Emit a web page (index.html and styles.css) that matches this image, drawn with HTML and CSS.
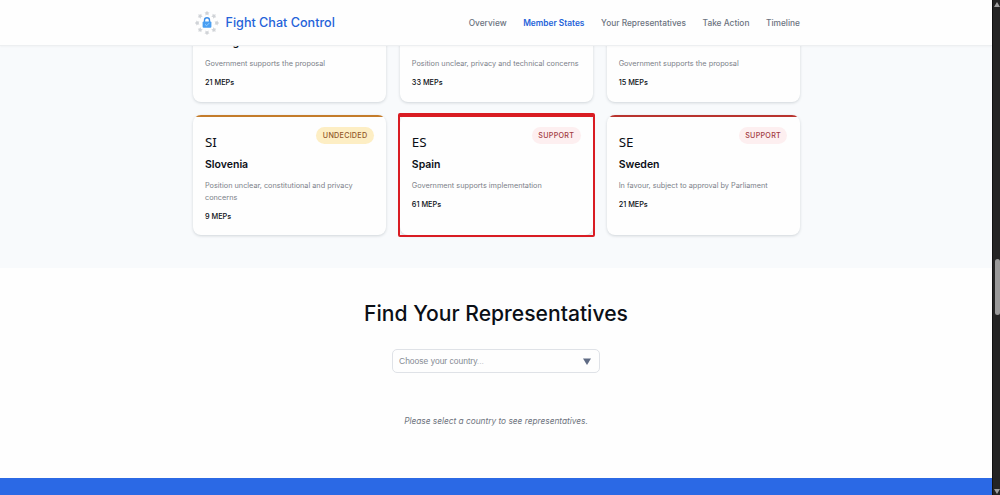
FILE: index.html
```html
<!DOCTYPE html>
<html lang="en">
<head>
<meta charset="utf-8">
<title>Fight Chat Control</title>
<link rel="stylesheet" href="styles.css">
</head>
<body>
<div class="window">
  <div class="page">
    <header class="header">
      <div class="brand">
        <svg class="logo" viewBox="0 0 24 24">
          <g fill="#d0d3d7">
            <path id="s" d="M12 -.2l.9 1.4 1.6.3-1.1 1.2.2 1.7-1.6-.8-1.6.8.2-1.7-1.1-1.2 1.6-.3z"/>
            <use href="#s" transform="rotate(45 12 12)"/>
            <use href="#s" transform="rotate(90 12 12)"/>
            <use href="#s" transform="rotate(135 12 12)"/>
            <use href="#s" transform="rotate(180 12 12)"/>
            <use href="#s" transform="rotate(225 12 12)"/>
            <use href="#s" transform="rotate(270 12 12)"/>
            <use href="#s" transform="rotate(315 12 12)"/>
          </g>
          <path d="M9.5 11V9.2a2.5 2.5 0 0 1 5 0V11" fill="none" stroke="#3d8ee8" stroke-width="1.4"/>
          <rect x="7.6" y="10.4" width="8.8" height="6.4" rx="1" fill="#4a9ff2"/>
          <path d="M10 13.3l1.6 1.5 2.6-2.7" fill="none" stroke="#9ed2ff" stroke-width=".9"/>
        </svg>
        <span>Fight Chat Control</span>
      </div>
      <nav class="nav">
        <a>Overview</a><a class="active">Member States</a><a>Your Representatives</a><a>Take Action</a><a>Timeline</a>
      </nav>
    </header>
    <section class="states">
      <div class="grid">
        <article class="card support"><div class="code"></div><h3>Portugal</h3><p>Government supports the proposal</p><strong>21 MEPs</strong></article>
        <article class="card undecided"><div class="code"></div><h3></h3><p>Position unclear, privacy and technical concerns</p><strong>33 MEPs</strong></article>
        <article class="card support"><div class="code"></div><h3></h3><p>Government supports the proposal</p><strong>15 MEPs</strong></article>
        <article class="card undecided"><span class="badge">UNDECIDED</span><div class="code">SI</div><h3>Slovenia</h3><p>Position unclear, constitutional and privacy concerns</p><strong>9 MEPs</strong></article>
        <article class="card support marked"><span class="badge">SUPPORT</span><div class="code">ES</div><h3>Spain</h3><p>Government supports implementation</p><strong>61 MEPs</strong></article>
        <article class="card support"><span class="badge">SUPPORT</span><div class="code">SE</div><h3>Sweden</h3><p>In favour, subject to approval by Parliament</p><strong>21 MEPs</strong></article>
      </div>
    </section>
    <section class="find">
      <h2>Find Your Representatives</h2>
      <div class="select"><span>Choose your country<span class="dots">...</span></span><svg class="caret" viewBox="0 0 8 7"><path d="M0 .5h8L4 7z" fill="#5f6b84"/></svg></div>
      <p class="hint">Please select a country to see representatives.</p>
    </section>
    <section class="cta"></section>
  </div>
  <div class="scrollbar">
    <svg class="arrow" viewBox="0 0 6 5"><path d="M3 0l3 5H0z" fill="#a0a0a0"/></svg>
    <div class="thumb"></div>
    <svg class="arrow" viewBox="0 0 6 5"><path d="M0 0h6L3 5z" fill="#a0a0a0"/></svg>
  </div>
</div>
</body>
</html>
```
FILE: styles.css
```css
* { box-sizing: border-box; }
body { margin: 0; font-family: Inter, "Liberation Sans", sans-serif; color: #0b0f16; }
h2, h3, p { margin: 0; }
.window { display: flex; width: 1000px; height: 495px; overflow: hidden; }
.page { flex: 1; display: flex; flex-direction: column; background: #fefefe; }
.header { position: relative; z-index: 2; height: 46px; flex: none; display: flex; align-items: center; justify-content: space-between; padding: 0 192px 0 195px; background: #fefefe; border-bottom: 1px solid #edeff1; box-shadow: 0 1px 2px rgba(0,0,0,.03); }
.brand { display: flex; align-items: center; gap: 6.5px; font-size: 12.6px; font-weight: 500; color: #2563d9; white-space: nowrap; }
.logo { width: 24px; height: 24px; }
.nav { display: flex; gap: 16.6px; font-size: 8.35px; font-weight: 500; color: #6c7380; white-space: nowrap; }
.active { color: #2563d9; font-weight: 600; }
.states { height: 222px; flex: none; overflow: hidden; background: #f8fafc; padding: 0 192px 0 193px; }
.grid { display: grid; grid-template-columns: repeat(3, 1fr); gap: 13px 13.5px; margin-top: -53px; }
.card { position: relative; display: flex; flex-direction: column; align-items: flex-start; min-height: 109px; padding: 20px 12px 12px; background: #fefefe; border-radius: 8px; box-shadow: 0 1px 3px rgba(20,35,50,.17); }
.card::before { content: ""; position: absolute; inset: 0; border-radius: 8px; pointer-events: none; background: linear-gradient(var(--tone) 2.5px, transparent 2.5px); }
.support { --tone: #b9342e; --pill: #fdeff0; --label: #a23a42; }
.undecided { --tone: #c47c2b; --pill: #fdeec4; --label: #91572a; }
.marked::after { content: ""; position: absolute; inset: -2px; border: 2px solid #d91c23; border-top-width: 4px; border-radius: 2px; }
.code { height: 14px; font: 13.4px/14px "Noto Sans", sans-serif; }
.card h3 { height: 15px; margin-top: 8px; font-size: 10.5px; line-height: 15px; font-weight: 600; }
.card p { margin-top: 8px; font-size: 7.3px; line-height: 12px; color: #7c8189; }
.card strong { margin-top: 8px; font-size: 7.3px; line-height: 10px; font-weight: 500; }
.card:nth-child(n+4) { min-height: 120px; }
.badge { position: absolute; top: 12px; right: 12.5px; height: 17px; padding: 0 6.5px; border-radius: 8.5px; background: var(--pill); color: var(--label); font-size: 7.2px; line-height: 17px; font-weight: 500; letter-spacing: .25px; }
.find { height: 210px; flex: none; display: flex; flex-direction: column; align-items: center; padding-top: 33px; }
.find h2 { font-size: 21.1px; line-height: 26px; font-weight: 500; }
.select { width: 208px; height: 24px; margin-top: 22px; display: flex; align-items: center; justify-content: space-between; padding: 0 8px 0 6px; border: 1px solid #dfe2e7; border-radius: 5px; font: 8.5px "Liberation Sans", sans-serif; color: #858b94; }
.dots { color: #c3c7cc; }
.caret { width: 8px; height: 7px; }
.hint { margin-top: 41px; font-size: 8.3px; line-height: 14px; font-style: italic; color: #6f7580; }
.cta { flex: 1; background: #2b69e5; }
.scrollbar { width: 8px; flex: none; display: flex; flex-direction: column; justify-content: space-between; align-items: center; padding: 2px 0 1px 1px; background: #242424; border-left: 1px solid #111; }
.arrow { width: 6px; height: 5px; }
.thumb { width: 5px; height: 56px; margin-top: 78px; border-radius: 3px; background: #9a9a9a; }
```
